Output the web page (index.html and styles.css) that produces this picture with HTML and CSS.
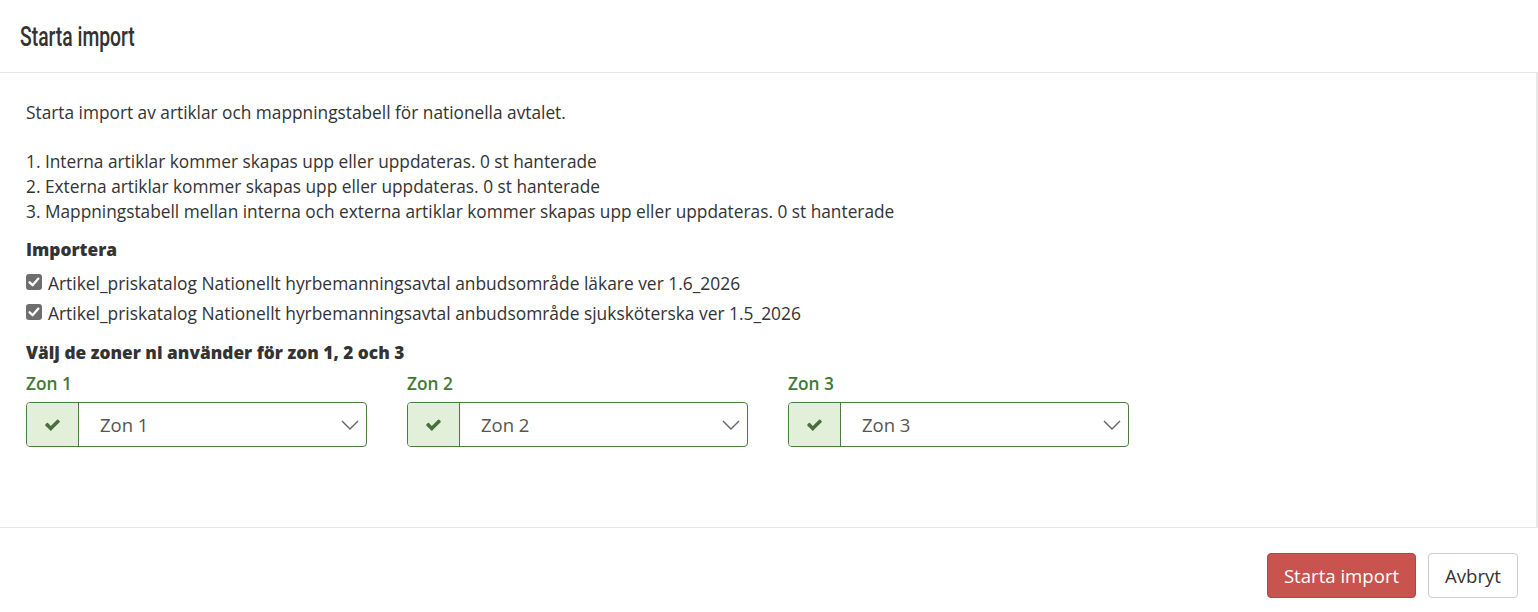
FILE: index.html
```html
<!DOCTYPE html>
<html lang="sv">
<head>
<meta charset="utf-8">
<link rel="stylesheet" href="styles.css">
</head>
<body>
<div class="modal">
  <div class="modal-header">
    <h4 class="modal-title">Starta import</h4>
  </div>
  <div class="modal-body">
    <p class="intro">Starta import av artiklar och mappningstabell för nationella avtalet.</p>
    <p class="steps">1. Interna artiklar kommer skapas upp eller uppdateras. 0 st hanterade<br>2. Externa artiklar kommer skapas upp eller uppdateras. 0 st hanterade<br>3. Mappningstabell mellan interna och externa artiklar kommer skapas upp eller uppdateras. 0 st hanterade</p>
    <div class="section-title">Importera</div>
    <label class="check"><span class="box"><svg viewBox="0 0 16 16" width="16" height="16"><path d="M3.6 8.3 L6.6 11.2 L12.4 4.6" fill="none" stroke="#fff" stroke-width="2.3" stroke-linecap="round" stroke-linejoin="round"/></svg></span>Artikel_priskatalog Nationellt hyrbemanningsavtal anbudsområde läkare ver 1.6_2026</label>
    <label class="check"><span class="box"><svg viewBox="0 0 16 16" width="16" height="16"><path d="M3.6 8.3 L6.6 11.2 L12.4 4.6" fill="none" stroke="#fff" stroke-width="2.3" stroke-linecap="round" stroke-linejoin="round"/></svg></span>Artikel_priskatalog Nationellt hyrbemanningsavtal anbudsområde sjuksköterska ver 1.5_2026</label>
    <div class="section-title zones-title">Välj de zoner ni använder för zon 1, 2 och 3</div>
    <div class="zones">
      <div class="zone">
        <div class="zone-label">Zon 1</div>
        <div class="select">
          <span class="addon"><svg viewBox="0 300 1792 1250" width="17" height="12"><path fill="#4a6f3f" d="M1671 566q0 40-28 68l-724 724-136 136q-28 28-68 28t-68-28l-136-136-362-362q-28-28-28-68t28-68l136-136q28-28 68-28t68 28l294 295 656-657q28-28 68-28t68 28l136 136q28 28 28 68z"/></svg></span>
          <span class="value">Zon 1</span>
          <svg class="chev" viewBox="0 0 18 10" width="18" height="10"><path d="M1 1 L9 9 L17 1" fill="none" stroke="#666" stroke-width="1.4"/></svg>
        </div>
      </div>
      <div class="zone">
        <div class="zone-label">Zon 2</div>
        <div class="select">
          <span class="addon"><svg viewBox="0 300 1792 1250" width="17" height="12"><path fill="#4a6f3f" d="M1671 566q0 40-28 68l-724 724-136 136q-28 28-68 28t-68-28l-136-136-362-362q-28-28-28-68t28-68l136-136q28-28 68-28t68 28l294 295 656-657q28-28 68-28t68 28l136 136q28 28 28 68z"/></svg></span>
          <span class="value">Zon 2</span>
          <svg class="chev" viewBox="0 0 18 10" width="18" height="10"><path d="M1 1 L9 9 L17 1" fill="none" stroke="#666" stroke-width="1.4"/></svg>
        </div>
      </div>
      <div class="zone">
        <div class="zone-label">Zon 3</div>
        <div class="select">
          <span class="addon"><svg viewBox="0 300 1792 1250" width="17" height="12"><path fill="#4a6f3f" d="M1671 566q0 40-28 68l-724 724-136 136q-28 28-68 28t-68-28l-136-136-362-362q-28-28-28-68t28-68l136-136q28-28 68-28t68 28l294 295 656-657q28-28 68-28t68 28l136 136q28 28 28 68z"/></svg></span>
          <span class="value">Zon 3</span>
          <svg class="chev" viewBox="0 0 18 10" width="18" height="10"><path d="M1 1 L9 9 L17 1" fill="none" stroke="#666" stroke-width="1.4"/></svg>
        </div>
      </div>
    </div>
  </div>
  <div class="modal-footer">
    <button class="btn btn-danger">Starta import</button>
    <button class="btn btn-default">Avbryt</button>
  </div>
</div>
</body>
</html>
```
FILE: styles.css
```css
* { box-sizing: border-box; }
html, body { margin: 0; padding: 0; background: #fff; }
body { font-family: "Open Sans", "Noto Sans", sans-serif; color: #333; font-size: 17.3px; }
.modal { width: 1538px; height: 612px; display: flex; flex-direction: column; }
.modal-header { height: 73px; border-bottom: 1px solid #e5e5e5; padding: 0 20px; display: flex; align-items: center; }
.modal-title { margin: 0; font-family: "Roboto", sans-serif; font-weight: 500; font-size: 28px; color: #333; transform: scaleX(0.69); transform-origin: left center; white-space: nowrap; }
.modal-body { height: 455px; border-bottom: 1px solid #e5e5e5; border-right: 2px solid #e8e8e8; padding: 27px 26px 0; }
.intro { margin: 0 0 24px; line-height: 25px; }
.steps { margin: 0 0 13px; line-height: 25px; }
.section-title { font-weight: 800; line-height: 25px; }
.check { display: flex; align-items: center; height: 30px; font-size: 17.4px; }
.check:first-of-type { margin-top: 6px; }
.box { width: 16px; height: 16px; border-radius: 3px; background: #6e6e6e; margin-right: 6px; display: inline-flex; margin-top: -3px; flex: none; }
.box svg { display: block; }
.zones-title { margin-top: 12px; }
.zones { display: flex; gap: 40px; margin-top: 8px; }
.zone { width: 341px; }
.zone-label { color: #3f7a35; font-weight: 600; line-height: 22px; margin-bottom: 7px; }
.select { display: flex; align-items: center; height: 45px; border: 1px solid #4a7c3f; border-radius: 4px; overflow: hidden; }
.addon { width: 52px; height: 100%; background: #e2efd9; border-right: 1px solid #4a7c3f; display: flex; align-items: center; justify-content: center; flex: none; }
.addon svg { display: block; }
.value { flex: 1; padding-left: 21px; font-size: 18.5px; color: #555; }
.chev { margin-right: 7px; display: block; }
.modal-footer { flex: 1; display: flex; justify-content: flex-end; align-items: flex-start; padding: 25px 20px 0; gap: 12px; }
.btn { font-family: "Open Sans", sans-serif; font-size: 18.6px; height: 45px; border-radius: 4px; padding: 0; cursor: pointer; }
.btn-danger { background: #c9534f; border: 1px solid #b04643; color: #fff; width: 149px; }
.btn-default { background: #fff; border: 1px solid #ccc; color: #333; width: 90px; }
```
